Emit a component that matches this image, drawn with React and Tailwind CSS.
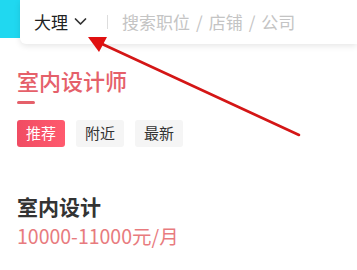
import React from "react";

const font = { fontFamily: '"Noto Sans CJK SC", "Noto Sans", sans-serif' };

const Tab = ({ label, active }) => (
    <div
        className={
            active
                ? "w-12 h-[27px] flex items-center justify-center rounded-[3px] bg-gradient-to-r from-[#f04c63] to-[#ff5a6e] text-white text-[15px]"
                : "w-12 h-[27px] flex items-center justify-center rounded-[3px] bg-[#f5f5f5] text-[#333] text-[15px]"
        }
    >
        {label}
    </div>
);

const App = () => {
    return (
        <div className="relative w-[357px] h-[270px] bg-white overflow-hidden" style={font}>
            {/* search header */}
            <div className="flex h-[46px]">
                <div className="w-[20px] h-[38px] bg-[#20d8f0]" />
                <div className="flex-1 h-[44px] bg-white rounded-bl-[6px] shadow-[0_2px_6px_rgba(0,0,0,0.1)] flex items-center pl-[14px] pb-[1px]">
                    <span className="text-[17px] text-[#222] leading-none">大理</span>
                    <svg className="ml-[5px]" width="15" height="15" viewBox="0 0 24 24" fill="none" stroke="#333" strokeWidth="2.8" strokeLinecap="round" strokeLinejoin="round">
                        <path d="M4 8l8 8 8-8" />
                    </svg>
                    <div className="ml-[19px] w-px h-[14px] bg-[#ddd]" />
                    <span className="ml-[14px] text-[17px] text-[#c4c4c4] leading-none whitespace-nowrap">
                        搜索职位<span className="mx-[6px]">/</span>店铺<span className="mx-[6px]">/</span>公司
                    </span>
                </div>
            </div>

            <div className="px-[17px] pt-[20px]">
                <div className="text-[22px] leading-[28px] font-medium text-[#e5606a]">室内设计师</div>
                <div className="mt-[7px] w-[18px] h-[3px] rounded-full bg-[#e5606a]" />
                <div className="mt-[16px] flex gap-[11px]">
                    <Tab label="推荐" active />
                    <Tab label="附近" />
                    <Tab label="最新" />
                </div>
                <div className="mt-[46px] text-[21px] leading-[26px] font-bold text-[#333]">室内设计</div>
                <div className="mt-[5px] text-[19.5px] leading-[24px] text-[#e87b7e]">10000-11000元/月</div>
            </div>

            {/* annotation arrow */}
            <svg className="absolute left-0 top-0 pointer-events-none" width="357" height="270">
                <line x1="299" y1="135" x2="100" y2="43" stroke="#d41616" strokeWidth="2.6" strokeLinecap="round" />
                <polygon points="88,37 107,37 99,52" fill="#e01010" />
            </svg>
        </div>
    );
};

export default App;
